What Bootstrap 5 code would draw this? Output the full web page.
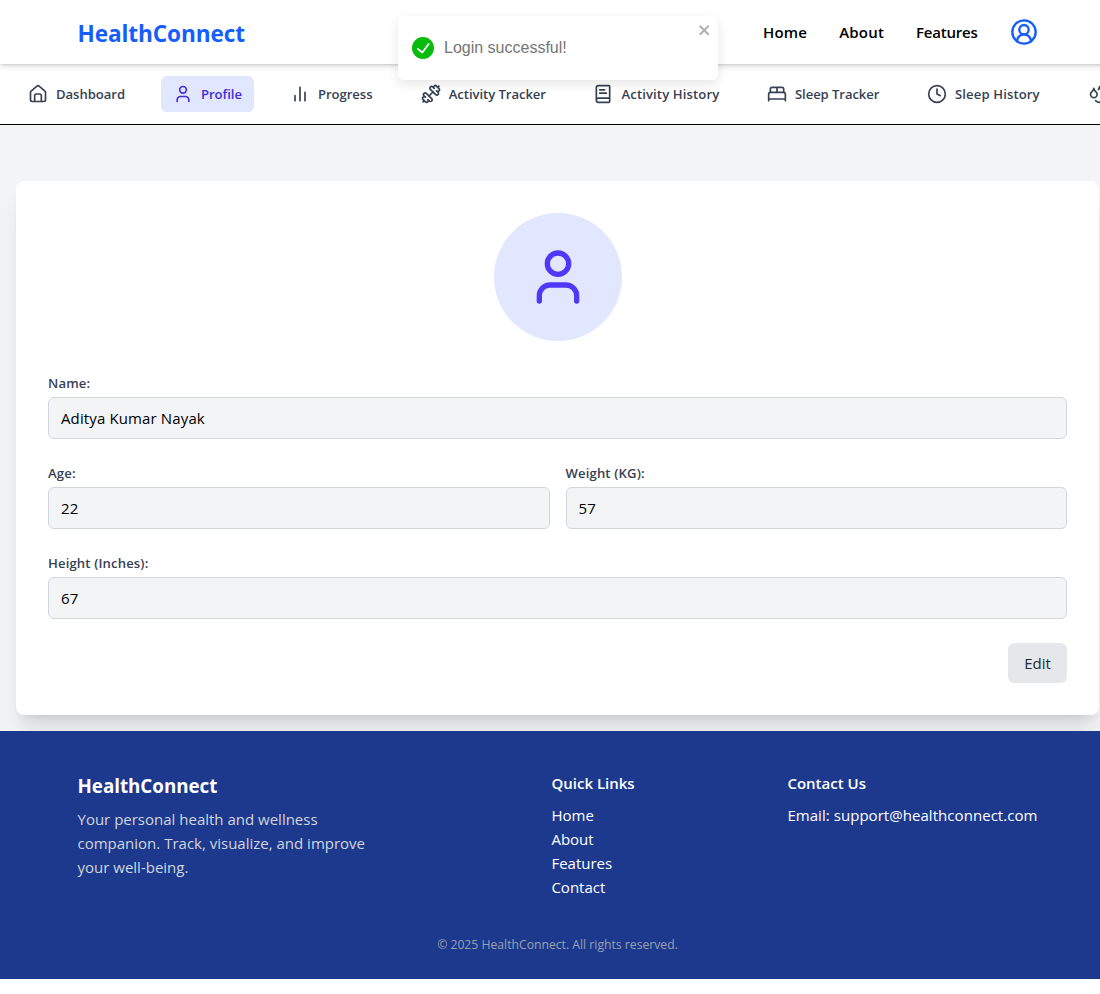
<!DOCTYPE html>
<html lang="en">
<head>
<meta charset="utf-8">
<title>HealthConnect</title>
<meta name="viewport" content="width=device-width, initial-scale=1">
<link href="https://cdn.jsdelivr.net/npm/bootstrap@5.3.0/dist/css/bootstrap.min.css" rel="stylesheet">
<style>
body{font-family:"Open Sans","Noto Sans",sans-serif;font-size:15px;line-height:24px;color:#000;background:#fff;overflow:hidden}
a{text-decoration:none;color:inherit}
.lu{fill:none;stroke:currentColor;stroke-width:2;stroke-linecap:round;stroke-linejoin:round;flex:none}
.page{width:1115px}
.inner{width:1024px;margin:0 auto;padding:0 32px}
.topbar{height:64px;background:#fff;box-shadow:0 4px 6px -1px rgba(0,0,0,.1),0 2px 4px -2px rgba(0,0,0,.1),0 1px 2px rgba(0,0,0,.08);z-index:2}
.brand{font-size:22.6px;font-weight:700;color:#155dfc;line-height:32px;padding-top:3px;letter-spacing:-.1px}
.toplinks{gap:32px;font-weight:600}
.toplinks .ls-wide{letter-spacing:.2px}
.toplinks .ls-tight{letter-spacing:-.22px}
.subnav{height:61px;border-bottom:1px solid #000;padding:0 16px;gap:24px;overflow:hidden}
.tab{height:36px;padding:0 12px;gap:8px;border-radius:6px;font-size:13.1px;font-weight:600;line-height:20px;color:#364153;white-space:nowrap;flex:none}
.tab.on{background:#e0e7ff;color:#432dd7}
.w-dash{width:121px;letter-spacing:-.04px}
.w-prof{width:93px;letter-spacing:-.05px}
.w-prog{width:106.7px;letter-spacing:-.05px}
.w-act{width:148.8px;letter-spacing:-.05px}
.w-acth{width:149.5px;letter-spacing:.12px}
.w-slp{width:136px;letter-spacing:-.08px}
.w-slph{width:137px;letter-spacing:.12px}
.stage{background:#f3f4f6;padding:56px 16px 16px}
.profile{background:#fff;border-radius:8px;padding:32px;height:534px;box-shadow:0 20px 25px -5px rgba(0,0,0,.1),0 8px 10px -6px rgba(0,0,0,.1)}
.avatar{width:128px;height:128px;background:#e0e7ff;color:#4f39f6}
.lab{font-size:13.1px;font-weight:600;line-height:20px;color:#364153;margin-bottom:4px;letter-spacing:.14px}
.box{height:42px;border:1px solid #d1d5dc;border-radius:6px;background:#f3f4f6;padding:8px 12px;letter-spacing:.13px}
.fields{display:grid;grid-template-columns:1fr 1fr;gap:24px 16px;margin-top:32px}
.wide{grid-column:span 2}
.edit{width:59px;height:40px;border:0;border-radius:6px;background:#e5e7eb;color:#1e2939;padding:0}
.foot{background:#1c398e;color:#fff;height:248px;padding-top:40px}
.foot h2{font-size:18.8px;font-weight:700;line-height:28px;margin:1px 0 7px;letter-spacing:-.03px}
.foot h3{font-size:15px;font-weight:600;line-height:24px;margin:0 0 8px}
.about{width:474px;color:#d1d5dc}
.links{width:236px}
.mail{letter-spacing:.05px}
.copy{font-size:12.2px;line-height:20px;color:#99a1af;margin-top:36px}
.note{left:398px;top:16px;width:320px;height:64px;border-radius:6px;background:#fff;box-shadow:0 4px 12px rgba(0,0,0,.1);padding:0 14px;gap:10px;z-index:5;font:16px "Liberation Sans",Arial,sans-serif;color:#757575}
.closer{right:6px;top:6px;color:#000;opacity:.3}
</style>
</head>
<body>
<div class="page">
<header class="topbar position-relative">
  <div class="inner h-100 d-flex align-items-center justify-content-between">
    <a href="#" class="brand">HealthConnect</a>
    <nav class="toplinks d-flex align-items-center">
      <a href="#" class="ls-wide">Home</a><a href="#" class="ls-wide">About</a><a href="#" class="ls-tight">Features</a>
      <svg class="lu" width="28" height="28" viewBox="0 0 24 24" style="color:#155dfc"><path d="M18 20a6 6 0 0 0-12 0"/><circle cx="12" cy="10" r="4"/><circle cx="12" cy="12" r="10"/></svg>
    </nav>
  </div>
</header>
<nav class="subnav d-flex align-items-center">
  <a class="tab w-dash d-flex align-items-center" href="#"><svg class="lu" width="20" height="20" viewBox="0 0 24 24"><path d="M16 21v-7a2 2 0 0 0-2-2h-4a2 2 0 0 0-2 2v7"/><path d="M3 10a2 2 0 0 1 .709-1.528l7-5.999a2 2 0 0 1 2.582 0l7 5.999A2 2 0 0 1 21 10v9a2 2 0 0 1-2 2H5a2 2 0 0 1-2-2z"/></svg>Dashboard</a>
  <a class="tab w-prof on d-flex align-items-center" href="#"><svg class="lu" width="20" height="20" viewBox="0 0 24 24"><path d="M19 21v-2a4 4 0 0 0-4-4H9a4 4 0 0 0-4 4v2"/><circle cx="12" cy="7" r="4"/></svg>Profile</a>
  <a class="tab w-prog d-flex align-items-center" href="#"><svg class="lu" width="20" height="20" viewBox="0 0 24 24"><path d="M18 20V10M12 20V4M6 20v-6"/></svg>Progress</a>
  <a class="tab w-act d-flex align-items-center" href="#"><svg class="lu" width="20" height="20" viewBox="0 0 24 24"><path d="M17.596 12.768a2 2 0 1 0 2.829-2.829l-1.768-1.767a2 2 0 0 0 2.828-2.829l-2.828-2.828a2 2 0 0 0-2.829 2.828l-1.767-1.768a2 2 0 1 0-2.829 2.829z"/><path d="m2.5 21.5 1.4-1.4M20.1 3.9l1.4-1.4"/><path d="M5.343 21.485a2 2 0 1 0 2.829-2.828l1.767 1.768a2 2 0 1 0 2.829-2.829l-6.364-6.364a2 2 0 1 0-2.829 2.829l1.768 1.767a2 2 0 0 0-2.828 2.829z"/><path d="m9.6 14.4 4.8-4.8"/></svg>Activity Tracker</a>
  <a class="tab w-acth d-flex align-items-center" href="#"><svg class="lu" width="20" height="20" viewBox="0 0 24 24"><path d="M4 19.5v-15A2.5 2.5 0 0 1 6.5 2H19a1 1 0 0 1 1 1v18a1 1 0 0 1-1 1H6.5a1 1 0 0 1 0-5H20"/><path d="M8 11h8M8 7h6"/></svg>Activity History</a>
  <a class="tab w-slp d-flex align-items-center" href="#"><svg class="lu" width="20" height="20" viewBox="0 0 24 24"><path d="M2 20v-8a2 2 0 0 1 2-2h16a2 2 0 0 1 2 2v8"/><path d="M4 10V6a2 2 0 0 1 2-2h12a2 2 0 0 1 2 2v4M12 4v6M2 18h20"/></svg>Sleep Tracker</a>
  <a class="tab w-slph d-flex align-items-center" href="#"><svg class="lu" width="20" height="20" viewBox="0 0 24 24"><circle cx="12" cy="12" r="10"/><path d="M12 6v6l4 2"/></svg>Sleep History</a>
  <a class="tab d-flex align-items-center" href="#"><svg class="lu" width="20" height="20" viewBox="0 0 24 24"><path d="M7 16.3c2.2 0 4-1.83 4-4.05 0-1.16-.57-2.26-1.71-3.19S7.29 6.75 7 5.3c-.29 1.45-1.14 2.84-2.29 3.76S3 11.1 3 12.25c0 2.22 1.8 4.05 4 4.05z"/><path d="M12.56 6.6A10.97 10.97 0 0 0 14 3.02c.5 2.5 2 4.9 4 6.5s3 3.5 3 5.5a6.98 6.98 0 0 1-11.91 4.97"/></svg></a>
</nav>
<main class="stage">
  <section class="profile">
    <div class="avatar rounded-circle d-flex align-items-center justify-content-center mx-auto"><svg class="lu" width="64" height="64" viewBox="0 0 24 24"><path d="M19 21v-2a4 4 0 0 0-4-4H9a4 4 0 0 0-4 4v2"/><circle cx="12" cy="7" r="4"/></svg></div>
    <div class="fields">
      <div class="wide"><div class="lab">Name:</div><div class="box">Aditya Kumar Nayak</div></div>
      <div><div class="lab">Age:</div><div class="box">22</div></div>
      <div><div class="lab">Weight (KG):</div><div class="box">57</div></div>
      <div class="wide"><div class="lab">Height (Inches):</div><div class="box">67</div></div>
    </div>
    <div class="d-flex justify-content-end mt-4"><button class="edit">Edit</button></div>
  </section>
</main>
<footer class="foot">
  <div class="inner d-flex">
    <div class="about"><h2 class="text-white">HealthConnect</h2>Your personal health and wellness<br>companion. Track, visualize, and improve<br>your well-being.</div>
    <div class="links"><h3>Quick Links</h3><a href="#">Home</a><br><a href="#">About</a><br><a href="#">Features</a><br><a href="#">Contact</a></div>
    <div class="text-nowrap"><h3>Contact Us</h3><span class="mail">Email: support@healthconnect.com</span></div>
  </div>
  <div class="copy text-center">© 2025 HealthConnect. All rights reserved.</div>
</footer>
</div>
<div class="note position-absolute d-flex align-items-center">
  <svg width="22" height="22" viewBox="0 0 24 24" fill="#07bc0c"><path d="M12 0a12 12 0 1012 12A12.014 12.014 0 0012 0zm6.927 8.2l-6.845 9.289a1.011 1.011 0 01-1.43.188l-4.888-3.908a1 1 0 111.25-1.562l4.076 3.261 6.227-8.451a1 1 0 111.61 1.183z"/></svg>
  <span>Login successful!</span>
  <svg class="closer position-absolute" width="14" height="16" viewBox="0 0 14 16" fill="currentColor"><path d="M7.71 8.23l3.75 3.75-1.48 1.48-3.75-3.75-3.75 3.75L1 11.98l3.75-3.75L1 4.48 2.48 3l3.75 3.75L9.98 3l1.48 1.48-3.75 3.75z"/></svg>
</div>
<script src="https://cdn.jsdelivr.net/npm/bootstrap@5.3.0/dist/js/bootstrap.bundle.min.js"></script>
</body>
</html>
